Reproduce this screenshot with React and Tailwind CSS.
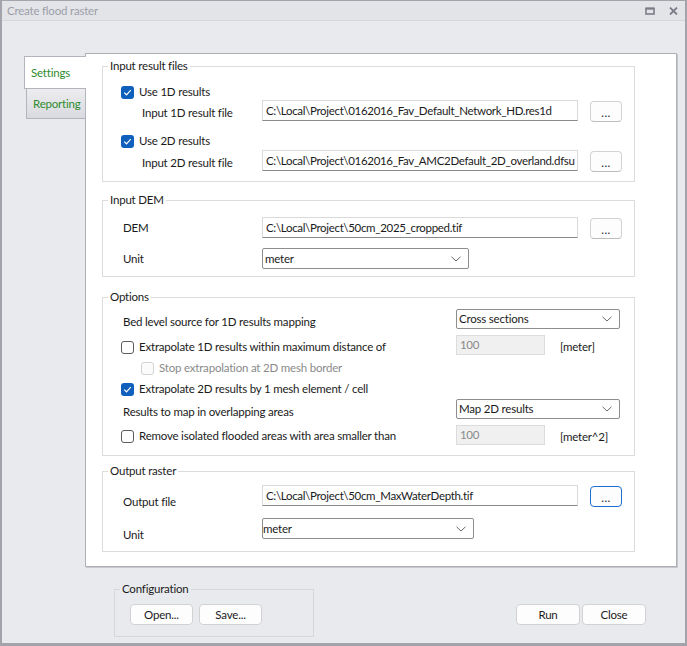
import React from "react";

const CheckBox = ({ checked, disabled }) => {
  if (checked) {
    return (
      <span className="flex h-[13px] w-[13px] shrink-0 items-center justify-center rounded-[3px] bg-[#0f5fbc]">
        <svg width="9" height="7" viewBox="0 0 9 7">
          <path d="M1.2 3.6 L3.5 5.8 L7.8 1.2" fill="none" stroke="white" strokeWidth="1.2" />
        </svg>
      </span>
    );
  }
  return (
    <span
      className={`h-[13px] w-[13px] shrink-0 rounded-[3px] border ${
        disabled ? "border-[#d2d2d2] bg-[#fbfbfb]" : "border-[#5c5c5c] bg-white"
      }`}
    />
  );
};

const Chevron = () => (
  <svg width="10" height="6" viewBox="0 0 10 6">
    <path d="M0.5 0.8 L5 5 L9.5 0.8" fill="none" stroke="#6a6a6a" strokeWidth="1" />
  </svg>
);

const TextBox = ({ value, className, disabled }) => (
  <div
    className={`flex items-center overflow-hidden whitespace-nowrap border pl-[3px] tracking-[-0.32px] ${
      disabled
        ? "border-[#dcdcdc] bg-[#f0f0f0] text-[#8a8a8a]"
        : "border-[#d9d9d9] border-b-[#8a8a8a] bg-white"
    } ${className}`}
  >
    {value}
  </div>
);

const Combo = ({ value, className }) => (
  <div
    className={`flex items-center justify-between rounded-[2px] border border-[#8d8d8d] bg-white pr-[7px] ${className}`}
  >
    <span>{value}</span>
    <Chevron />
  </div>
);

const Button = ({ children, className }) => (
  <button
    className={`flex items-center justify-center rounded-[4px] border bg-[#fdfdfd] leading-none text-[#1b1b1b] ${className}`}
  >
    {children}
  </button>
);

const BrowseButton = ({ focused }) => (
  <Button
    className={`ml-[12px] mt-[2px] h-[21px] w-[32px] pt-[3px] tracking-[0.5px] ${
      focused ? "border-[#1a6fd0]" : "border-[#d2d2d2] border-b-[#bdbdbd]"
    }`}
  >
    ...
  </Button>
);

const GroupBox = ({ title, className, children }) => (
  <fieldset className={`w-[533px] border border-[#dcdcdc] ${className}`}>
    <legend className="ml-[5px] px-[2px] leading-[16px]">{title}</legend>
    {children}
  </fieldset>
);

const FileRow = ({ label, value, labelClass, focused, className }) => (
  <div className={`flex h-[21px] items-center ${className}`}>
    <span className={`w-[159px] shrink-0 ${labelClass}`}>{label}</span>
    <TextBox value={value} className="h-full w-[316px]" />
    <BrowseButton focused={focused} />
  </div>
);

const CheckRow = ({ label, checked, disabled, className }) => (
  <div className={`flex items-center gap-[5px] ${className}`}>
    <CheckBox checked={checked} disabled={disabled} />
    <span className={disabled ? "text-[#8a8a8a]" : ""}>{label}</span>
  </div>
);

const SettingsPage = () => (
  <div className="flex flex-col pl-[16px] pt-[4px]">
    <GroupBox title="Input result files" className="pb-[10px]">
      <CheckRow label="Use 1D results" checked className="mt-[10px] h-[16px] pl-[18px]" />
      <FileRow
        label="Input 1D result file"
        value="C:\Local\Project\0162016_Fav_Default_Network_HD.res1d"
        labelClass="pl-[39px] pt-[5px]"
      />
      <CheckRow label="Use 2D results" checked className="mt-[12px] h-[16px] pl-[18px]" />
      <FileRow
        label="Input 2D result file"
        value="C:\Local\Project\0162016_Fav_AMC2Default_2D_overland.dfsu"
        labelClass="pl-[39px] pt-[5px]"
        className="mt-[1px]"
      />
    </GroupBox>

    <GroupBox title="Input DEM" className="mt-[10px] pb-[7px]">
      <FileRow
        label="DEM"
        value="C:\Local\Project\50cm_2025_cropped.tif"
        labelClass="pl-[20px]"
        className="mt-[9px]"
      />
      <div className="mt-[10px] flex h-[21px] items-center">
        <span className="w-[159px] shrink-0 pl-[20px]">Unit</span>
        <Combo value="meter" className="h-full w-[207px] pl-[2px]" />
      </div>
    </GroupBox>

    <GroupBox title="Options" className="mt-[12px] pb-[10px]">
      <div className="mt-[4px] flex h-[20px] items-center">
        <span className="w-[353px] shrink-0 pl-[20px] pt-[6px]">Bed level source for 1D results mapping</span>
        <Combo value="Cross sections" className="h-full w-[164px] pl-[2px]" />
      </div>
      <div className="mt-[6px] flex h-[20px] items-center">
        <CheckRow label="Extrapolate 1D results within maximum distance of" className="w-[353px] shrink-0 pl-[18px] pt-[4px]" />
        <TextBox value="100" disabled className="h-full w-[89px]" />
        <span className="ml-[15px] pt-[4px]">[meter]</span>
      </div>
      <CheckRow label="Stop extrapolation at 2D mesh border" disabled className="mt-[3px] h-[20px] pl-[38px]" />
      <CheckRow label="Extrapolate 2D results by 1 mesh element / cell" checked className="mt-[1px] h-[20px] pl-[18px]" />
      <div className="flex h-[20px] items-center">
        <span className="w-[353px] shrink-0 pl-[20px] pt-[6px]">Results to map in overlapping areas</span>
        <Combo value="Map 2D results" className="h-full w-[164px] pl-[2px]" />
      </div>
      <div className="mt-[6px] flex h-[20px] items-center">
        <CheckRow label="Remove isolated flooded areas with area smaller than" className="w-[353px] shrink-0 pl-[18px] pt-[2px]" />
        <TextBox value="100" disabled className="h-full w-[89px]" />
        <span className="ml-[15px] pt-[4px]">[meter^2]</span>
      </div>
    </GroupBox>

    <GroupBox title="Output raster" className="mt-[7px] pb-[12px]">
      <FileRow
        label="Output file"
        value="C:\Local\Project\50cm_MaxWaterDepth.tif"
        labelClass="pl-[20px] pt-[13px]"
        focused
        className="mt-[6px]"
      />
      <div className="mt-[12px] flex h-[21px] items-center">
        <span className="w-[159px] shrink-0 pl-[20px] pt-[13px]">Unit</span>
        <Combo value="meter" className="h-full w-[212px] border-[#6f6f6f]" />
      </div>
    </GroupBox>
  </div>
);

export default function App() {
  return (
    <div className="flex h-[646px] w-[687px] flex-col border-x-[2px] border-b-[3px] border-t border-[#a2a3ab] bg-[#e9eaee] font-['Lato','Noto_Sans',sans-serif] text-[11.5px] tracking-[-0.2px] text-[#1b1b1b]">
      {/* title bar */}
      <div className="flex h-[20px] shrink-0 items-center justify-between border-b border-[#d6d7dc] bg-[#e3e4e8] pl-[5px] pr-[7px]">
        <span className="text-[#9d9ea8]">Create flood raster</span>
        <div className="flex items-center gap-[14px]">
          <svg width="10" height="8" viewBox="0 0 10 8">
            <rect x="1" y="1.5" width="8" height="5.5" fill="none" stroke="#7c7d88" strokeWidth="1.6" />
            <rect x="0.5" y="0.5" width="9" height="2" fill="#7c7d88" />
          </svg>
          <svg width="9" height="8" viewBox="0 0 9 8">
            <path d="M1 0.5 L8 7.5 M8 0.5 L1 7.5" stroke="#7c7d88" strokeWidth="1.8" />
          </svg>
        </div>
      </div>

      {/* body */}
      <div className="flex flex-1 flex-col pl-[22px] pr-[8px] pt-[32px]">
        <div className="flex">
          <div className="relative z-10 -mr-px flex w-[62px] shrink-0 flex-col pt-[3px]">
            <div className="flex h-[33px] items-center border-y border-l border-[#b3b4bc] bg-white pl-[6px] text-[#2e8b2e]">
              Settings
            </div>
            <div className="ml-[2px] flex h-[30px] items-center border-b border-l border-r border-[#b3b4bc] bg-gradient-to-b from-[#ededf0] to-[#d9dadf] pl-[6px] text-[#2e8b2e]">
              Reporting
            </div>
          </div>
          <div className="h-[514px] w-[593px] border border-[#aeafb7] bg-white shadow-[1px_1px_0_#c6c7cf]">
            <SettingsPage />
          </div>
        </div>

        <div className="mt-[14px] flex items-start">
          <fieldset className="ml-[90px] w-[200px] border border-[#d6d7dc] pb-[11px]">
            <legend className="ml-[5px] px-[2px] leading-[16px]">Configuration</legend>
            <div className="mt-[7px] flex gap-[6px] pl-[15px]">
              <Button className="h-[21px] w-[63px] border-[#d2d2d2]">Open...</Button>
              <Button className="h-[21px] w-[63px] border-[#d2d2d2]">Save...</Button>
            </div>
          </fieldset>
          <div className="ml-auto mr-[31px] mt-[23px] flex gap-[2px]">
            <Button className="h-[21px] w-[64px] border-[#d2d2d2]">Run</Button>
            <Button className="h-[21px] w-[64px] border-[#d2d2d2]">Close</Button>
          </div>
        </div>
      </div>
    </div>
  );
}
